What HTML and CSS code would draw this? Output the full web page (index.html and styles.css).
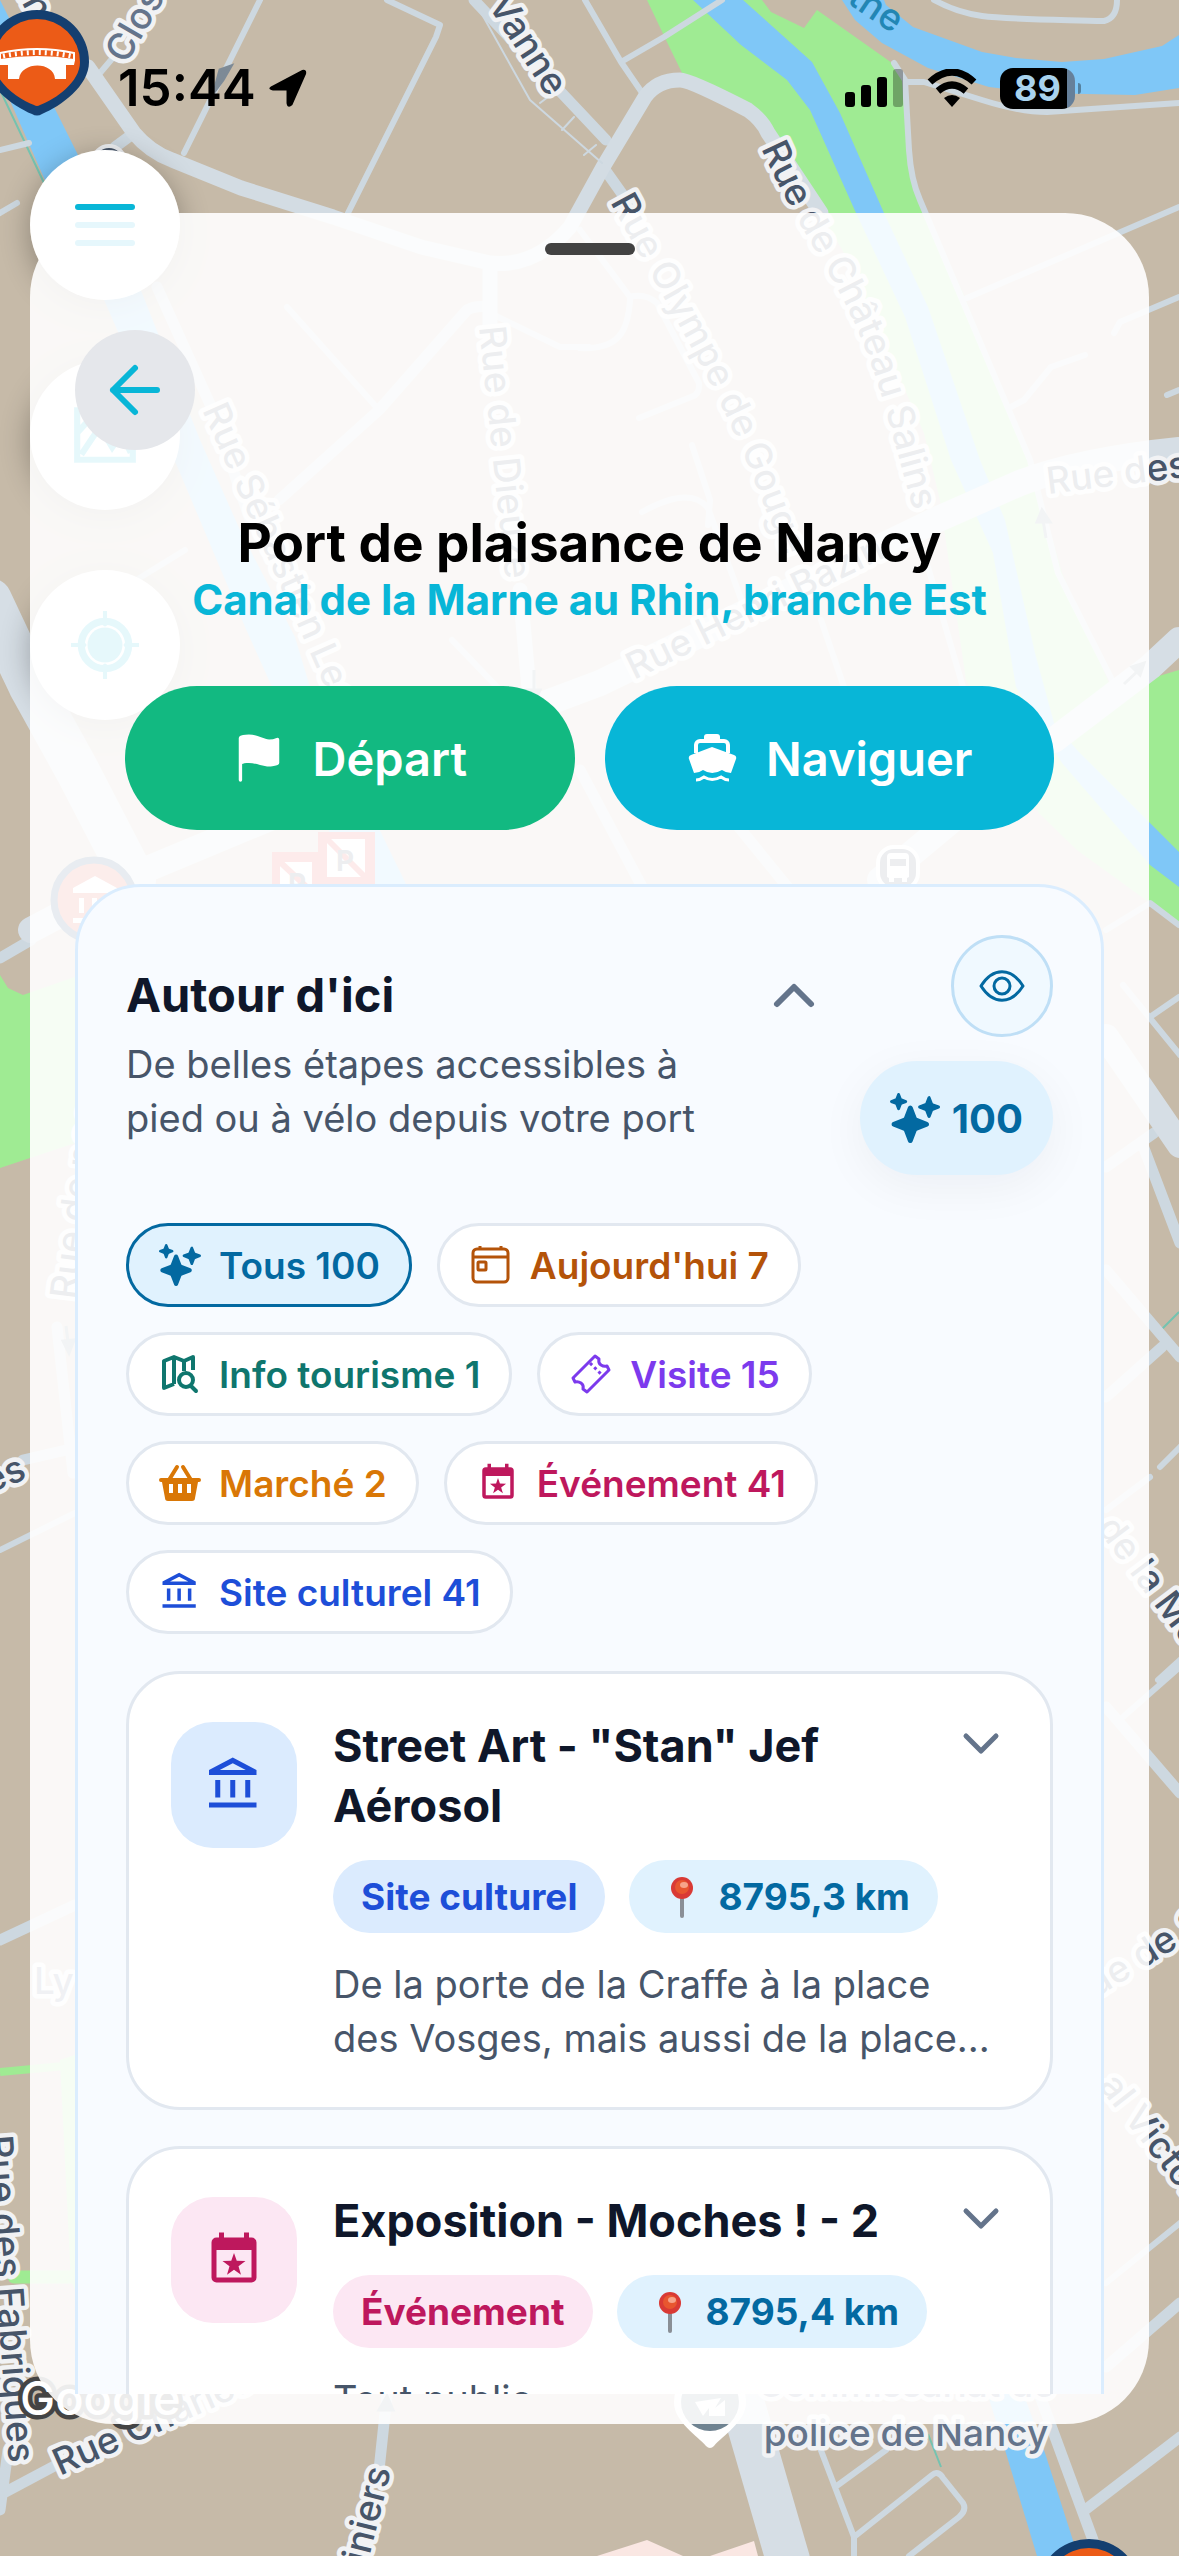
FILE: index.html
```html
<!DOCTYPE html>
<html lang="fr">
<head>
    <meta charset="UTF-8">
    <meta name="viewport" content="width=device-width, initial-scale=1.0">
    <title>Port de plaisance de Nancy</title>
    <link rel="stylesheet" href="styles.css">
</head>
<body>
    <!-- Shared icons -->
    <svg class="icon-defs" aria-hidden="true">
        <symbol id="icon-sparkles" viewBox="0 0 512 512">
            <path fill="currentColor" d="M208 512a24.84 24.84 0 01-23.34-16l-39.84-103.6a16.06 16.06 0 00-9.19-9.19L32 343.34a25 25 0 010-46.68l103.6-39.84a16.06 16.06 0 009.19-9.19L184.66 144a25 25 0 0146.68 0l39.84 103.6a16.06 16.06 0 009.19 9.19l103 39.63a25.49 25.49 0 0116.63 24.1 24.82 24.82 0 01-16 22.82l-103.6 39.84a16.06 16.06 0 00-9.19 9.19L231.34 496A24.84 24.84 0 01208 512zM88 176a14.67 14.67 0 01-13.69-9.4l-16.86-43.84a7.28 7.28 0 00-4.21-4.21L9.4 101.69a14.67 14.67 0 010-27.38l43.84-16.86a7.31 7.31 0 004.21-4.21L74.16 9.79A15 15 0 0186.23.11a14.67 14.67 0 0115.46 9.29l16.86 43.84a7.31 7.31 0 004.21 4.21l43.84 16.86a14.67 14.67 0 010 27.38l-43.84 16.86a7.28 7.28 0 00-4.21 4.21l-16.86 43.84A14.67 14.67 0 0188 176zM400 256a16 16 0 01-14.93-10.26l-22.84-59.37a8 8 0 00-4.6-4.6l-59.37-22.84a16 16 0 010-29.86l59.37-22.84a8 8 0 004.6-4.6l22.67-58.95a16.45 16.45 0 0113.17-10.57 16 16 0 0116.86 10.16l22.84 59.37a8 8 0 004.6 4.6l59.37 22.84a16 16 0 010 29.86l-59.37 22.84a8 8 0 00-4.6 4.6l-22.84 59.37A16 16 0 01400 256z"/>
        </symbol>
        <symbol id="icon-museum" viewBox="0 0 24 24">
            <path fill="currentColor" d="M6.5,10H4.5V17H6.5V10M12.5,10H10.5V17H12.5V10M21,19H2V21H21V19M18.5,10H16.5V17H18.5V10M11.5,3.26L16.71,6H6.29L11.5,3.26M11.5,1L2,6V8H21V6L11.5,1Z"/>
        </symbol>
        <symbol id="icon-event" viewBox="0 0 24 24">
            <path fill="currentColor" fill-rule="evenodd" d="M6 1h2v2h8V1h2v2h1a2 2 0 0 1 2 2v14a2 2 0 0 1-2 2H5a2 2 0 0 1-2-2V5a2 2 0 0 1 2-2h1zM5 8v11h14V8z"/>
            <path fill="currentColor" d="M12 9.2l1.1 3.1 3.5.1-2.8 2.1 1 3.4L12 15.9l-2.8 2 1-3.4-2.8-2.1 3.5-.1z"/>
        </symbol>
        <symbol id="icon-pin" viewBox="0 0 48 42">
            <rect x="23" y="21" width="4" height="21" rx="2" fill="#8a8f96"/>
            <circle cx="25" cy="12" r="11" fill="#d93a35"/>
            <circle cx="25" cy="11" r="7" fill="#e8562f"/>
            <ellipse cx="27" cy="9" rx="4" ry="3" fill="#f7a48a"/>
        </symbol>
        <symbol id="icon-down" viewBox="0 0 54 54">
            <path d="M12 20l15 15 15-15" fill="none" stroke="currentColor" stroke-width="5" stroke-linecap="round" stroke-linejoin="round"/>
        </symbol>
        <symbol id="marker-bridge" viewBox="0 0 104 106">
            <path d="M52 0a52 52 0 0 1 52 52c0 24-28 44-47 52q-5 3-10 0C28 96 0 76 0 52A52 52 0 0 1 52 0z" fill="#143f70"/>
            <path d="M52 9a43 43 0 0 1 43 43c0 20-24 37-40 43q-3 2-6 0C33 89 9 72 9 52A43 43 0 0 1 52 9z" fill="#ec5b17"/>
            <path d="M15 43q37-8 74 0v7q-37-6-74 0z" fill="none" stroke="#fff" stroke-width="2"/>
            <path d="M18 46q34-7 68 0" fill="none" stroke="#fff" stroke-width="5" stroke-dasharray="2 4"/>
            <path d="M14 50q38-6 76 0l-1 5h-8v14H70c-1-18-34-18-36 0H23V55h-8z" fill="#fff"/>
        </symbol>
    </svg>

    <!-- Map background -->
    <svg class="map" viewBox="0 0 1179 2556" preserveAspectRatio="xMidYMid slice" aria-hidden="true">
        <defs>
            <path id="street-salins" d="M761 148C792 218 825 260 853 320S890 430 914 512"/>
            <path id="street-olympe" d="M610 202C643 263 678 320 714 391S762 504 786 560"/>
            <path id="street-leclerc" d="M202 410L345 732"/>
        </defs>

        <g class="map-park">
            <path d="M647 0L666 40 683 75 748 107 775 138 821 213 848 260 924 433 940 500 966 680 1000 740 1039 813 1077 850 1146 900 1179 923V670L1112 690 1062 573 1030 460 963 293 926 213 911 173 905 80 892 63 817 10 804 28 771 12 762 0z"/>
            <path d="M0 975L8 988 23 995 75 977V1143L0 1168z"/>
            <path d="M60 2060L75 2055V2290L71 2280z"/>
            <path class="map-hedge" d="M0 2072L75 2065"/>
            <path class="map-hedge wide" d="M14 2277H72"/>
        </g>
        <g class="map-water">
            <path d="M693 0L741 45 787 80 810 110 856 213 905 317 951 460 993 553 1016 687 1062 763 1150 865 1179 887V852L1150 823 1077 750 1054 723 1035 653 1005 520 980 460 928 307 884 213 840 113 812 62 743 0z"/>
            <path d="M842 0L855 20 882 43 928 68 989 87 1039 93 1135 95 1179 88V35L1162 46 1104 59 1062 62 1016 58 982 52 913 27 886 5 884 0z"/>
            <path d="M0 0L54 107 77 153 142 293 200 440 240 530 295 637 310 687 406 884H350L272 687 245 627 180 473 101 293 44 178 11 103 0 70z"/>
            <path d="M980 2370L1005 2450 1037 2556H1078L1045 2453 1015 2370z"/>
        </g>
        <path class="map-building" d="M597 2556L647 2540 683 2556zM710 2556L754 2541 758 2556z"/>
        <path class="map-cycle" d="M0 90L45 185M928 2434L941 2467M1161 1330L1179 1312"/>

        <g class="map-road">
            <path class="lane" d="M260 0L184 153M387 0L440 25 436 37 348 213M111 60L100 73M0 150L29 143M0 213L17 203M585 0L621 62 645 97M722 0L664 37 621 62M934 0C970 20 990 18 1104 21Q1117 18 1117 0M894 63L905 80 909 150Q911 180 920 200L1030 460 1058 573 1112 680M905 82H924L982 100Q1020 112 1047 112L1179 103M1179 207L967 298M1179 297L1120 322 1114 333M1085 355L1051 367 1024 400 1009 408M1179 390L1167 395"/>
            <path class="lane" d="M580 230L630 297Q645 293 657 303L699 383Q700 395 691 397L639 418M630 300C628 330 620 350 580 348M287 307L379 410M494 315L560 347H589M692 445L710 500 708 525M642 512Q690 485 708 508L745 610M821 620L844 687M928 567L963 687M500 690L452 640M185 550L120 590M1123 985L1180 1055M1150 1017L1179 997M1106 1510L1150 1477M1160 1467L1180 1447M1158 1680L1180 1660M1123 1717L1180 1667M1106 2283L1180 2223M0 1550L75 1513M817 2440L854 2537V2556M838 2485L886 2450M854 2537L932 2475Q938 2470 943 2478L963 2503Q967 2510 959 2517L909 2556M1106 930L1150 903 1179 925"/>
            <path class="street" d="M490 263V307Q475 305 467 310L379 410 279 500M157 287L214 413 250 520M649 900L580 770M733 820L790 890M1106 1167L1154 1133M1142 1143L1180 1243M1106 1270L1180 1357M1106 1397L1162 1347M1106 1707L1180 1793M0 1940L75 1905M23 1460L75 1448M57 1327L73 1473M1106 2367L1180 2303M1036 2385L1093 2540M1085 2510L1180 2437M0 2495L60 2463M0 2510L8 2450M387 2395L379 2470M0 958L31 940M474 0L606 140M603 167L630 205M134 133L115 147"/>
            <path class="avenue" d="M88 67L134 133Q150 152 172 160L241 188 333 217 421 247 490 263Q535 268 570 227L603 167 645 97Q657 80 680 80 690 80 748 110 762 120 768 133L821 213M490 263V330M520 590L530 700"/>
            <path class="boulevard" d="M31 930L145 870 536 707 600 683 936 520 1020 483Q1080 460 1179 450M1054 740L1150 667 1179 640M1106 1037L1180 1145M880 880L1000 780"/>
            <path class="main" d="M-10 600L30 685 77 770 134 880M730 2360L788 2560"/>
            <path class="rail" d="M474 0L530 100 602 163M526 60L537 52M540 103L552 94M562 130L574 117M584 155L596 145"/>
        </g>

        <g class="map-labels">
            <text transform="translate(548 98) rotate(57)" text-anchor="end">la Vanne</text>
            <text transform="translate(126 65) rotate(-60)" class="soft">Clos</text>
            <text transform="translate(32 22) rotate(62)" text-anchor="end">Martin</text>
            <text transform="translate(893 34) rotate(34)" text-anchor="end" class="river">Meurthe</text>
            <text><textPath href="#street-salins">Rue de Château Salins</textPath></text>
            <text><textPath href="#street-olympe">Rue Olympe de Gouges</textPath></text>
            <text><textPath href="#street-leclerc">Rue Sébastien Leclerc</textPath></text>
            <text transform="translate(479 327) rotate(84)">Rue de Dieuze</text>
            <text transform="translate(634 680) rotate(-26)">Rue Henri Bazin</text>
            <text transform="translate(1048 494) rotate(-7)">Rue des Jardins</text>
            <text transform="translate(76 1300) rotate(-83)">Rue de nos</text>
            <text transform="translate(28 1478) rotate(-22)" text-anchor="end">Rues</text>
            <text transform="translate(1096 1528) rotate(53)">de la Monnaie</text>
            <text transform="translate(1096 1998) rotate(-32)">ue de Strasbourg</text>
            <text transform="translate(1098 2086) rotate(52)">al Victor</text>
            <text transform="translate(34 1994)" class="soft">Ly</text>
            <text transform="translate(-14 2136) rotate(86)">Rue des Fabriques</text>
            <text transform="translate(60 2476) rotate(-24)">Rue Charles III</text>
            <text transform="translate(391 2470) rotate(-76)" text-anchor="end">Jardiniers</text>
            <text x="906" y="2397" text-anchor="middle" class="soft poi">Commissariat de</text>
            <text x="906" y="2446" text-anchor="middle" class="soft poi">police de Nancy</text>
            <text x="20" y="2415" class="brand">Google</text>
        </g>

        <path class="map-arrow" d="M231 66l-8 14-9 12 6-22zM534 670v24m-6-4l6 14 6-14zM1046 538l-3-18m-6 2l5-12 8 12zM1124 684l16-15m-8-2l12-4-4 12zM66 1326l2 16m-5-1l6 12 5-13zM387 2396l-8 14h14z"/>
        <circle cx="109" cy="162" r="16" fill="#475569" stroke="#eef0f3" stroke-width="4"/>
        <path d="M674 2402a36 36 0 0 1 72 0c0 20-24 34-32 44q-4 4-8 0c-8-10-32-24-32-44z" fill="#fff"/>
        <circle cx="710" cy="2402" r="29" fill="#6f8391"/>
        <path d="M695 2402l8 14 6-8v8h16v-16l-10 8 6-10z" fill="#fff"/>
        <g>
            <circle cx="94" cy="900" r="40" fill="#d94a38" stroke="#143f70" stroke-width="7"/>
            <path d="M73 893v-5l22-12 22 12v5zM79 898h5v15h-5zM92 898h5v15h-5zM105 898h5v15h-5zM73 918h44v5H73z" fill="#fff"/>
            <path d="M272 852h48v40h-48z" fill="#e33b34"/>
            <path d="M280 862h32v30h-32z" fill="#fff"/>
            <path d="M318 832h57v54h-57z" fill="#e33b34"/>
            <path d="M327 839h38v38h-38z" fill="#fff"/>
            <path d="M327 839l38 38M280 862l32 30" stroke="#e33b34" stroke-width="6"/>
            <text x="336" y="871" class="sign">P</text>
            <text x="288" y="894" class="sign">P</text>
            <rect x="878" y="847" width="40" height="42" rx="16" fill="#475569" stroke="#fff" stroke-width="4"/>
            <path d="M887 877v-20q0-4 4-4h14q4 0 4 4v20l-2 1v4h-5v-4h-8v4h-5v-4z" fill="#fff"/>
            <path d="M890 859h16v7h-16z" fill="#475569"/>
        </g>
        <use href="#marker-bridge" x="-15" y="10" width="104" height="106"/>
        <use href="#marker-bridge" x="1037" y="2539" width="104" height="106"/>
    </svg>

    <!-- Status bar -->
    <div class="status-bar">
        <div class="status-left">
            <span class="status-time">15:44</span>
            <svg class="status-location" viewBox="0 0 40 40"><path d="M3 18L35 1q5-1 4 4L25 37q-5 4-6-2V22H5q-6-1-2-4z"/></svg>
        </div>
        <div class="status-right">
            <svg class="status-signal" viewBox="0 0 59 38">
                <rect x="0" y="23" width="10" height="15" rx="3"/>
                <rect x="16" y="16" width="10" height="22" rx="3"/>
                <rect x="32" y="8" width="10" height="30" rx="3"/>
                <rect x="48" y="0" width="10" height="38" rx="3" opacity=".3"/>
            </svg>
            <svg class="status-wifi" viewBox="0 0 50 38">
                <path d="M3 13q22-20 44 0M11 22q14-12 28 0" fill="none" stroke="#000" stroke-width="7"/>
                <path d="M17 29q8-6 16 0l-8 9z"/>
            </svg>
            <div class="battery"><span class="battery-level">89</span></div>
        </div>
    </div>

    <!-- Map controls under the sheet -->
    <div class="map-controls">
        <div class="menu-shadow"></div>
        <button type="button" class="round-button" aria-label="Type de carte">
            <svg class="round-icon" viewBox="0 0 66 66"><path d="M6 9h54v48H6zM6 31L26 9M10 52l18-27 12 20 9-13 9 18" fill="none" stroke="currentColor" stroke-width="6"/></svg>
        </button>
        <button type="button" class="round-button" aria-label="Ma position">
            <svg class="round-icon" viewBox="0 0 66 66">
                <circle cx="33" cy="33" r="23" fill="none" stroke="currentColor" stroke-width="7"/>
                <circle cx="33" cy="33" r="17" fill="currentColor"/>
                <path d="M33 1v12M33 53v12M1 33h12M53 33h12" stroke="currentColor" stroke-width="4" stroke-linecap="round"/>
            </svg>
        </button>
    </div>

    <button type="button" class="round-button menu-button" aria-label="Menu">
        <span class="menu-line active"></span>
        <span class="menu-line"></span>
        <span class="menu-line"></span>
    </button>

    <main class="app">
        <section class="sheet">
            <div class="sheet-handle"></div>
            <div class="sheet-content">
                <button type="button" class="back-button" aria-label="Retour">
                    <svg class="back-icon" viewBox="0 0 60 60"><path d="M30 8L8 30l22 22M8 30h44" fill="none" stroke="currentColor" stroke-width="6" stroke-linecap="round" stroke-linejoin="round"/></svg>
                </button>

                <header class="place">
                    <h1>Port de plaisance de Nancy</h1>
                    <p class="waterway">Canal de la Marne au Rhin, branche Est</p>
                </header>

                <div class="actions">
                    <button type="button" class="action start">
                        <svg class="action-icon" viewBox="0 0 512 512"><path fill="currentColor" d="M80 480a16 16 0 01-16-16V68.13a24 24 0 0111.88-20.72C88 40.38 112.38 32 160 32c37.21 0 78.83 14.71 115.55 27.68C305.12 70.13 333.05 80 352 80a183.84 183.84 0 0071-14.5 18 18 0 0125 16.58v219.36a20 20 0 01-12 18.31c-8.71 3.81-40.51 16.25-84 16.25-24.14 0-54.38-7.14-86.39-14.71C229.63 312.79 192.43 304 160 304c-36.87 0-55.74 5.58-64 9.11V464a16 16 0 01-16 16z"/></svg>
                        Départ
                    </button>
                    <button type="button" class="action navigate">
                        <svg class="action-icon" viewBox="0 0 54 54">
                            <path d="M10 22v-8a4 4 0 0 1 4-4h24a4 4 0 0 1 4 4v8" fill="none" stroke="currentColor" stroke-width="4"/>
                            <rect x="18" y="3" width="16" height="9" rx="3" fill="currentColor"/>
                            <path d="M26 16l22 8q3 1 2 4l-5 14q-5 0-9-3-10 6-19 0-4 3-9 3L3 28q-1-3 2-4z" fill="currentColor"/>
                            <path d="M10 49q4 0 8-3 8 5 17 0 4 3 8 3" fill="none" stroke="currentColor" stroke-width="3"/>
                        </svg>
                        Naviguer
                    </button>
                </div>

                <section class="nearby">
                    <div class="nearby-header">
                        <button type="button" class="nearby-toggle" aria-expanded="true">
                            <span class="nearby-text">
                                <span class="nearby-title">Autour d'ici</span>
                                <span class="nearby-subtitle">De belles étapes accessibles à pied ou à vélo depuis votre port</span>
                            </span>
                            <svg class="toggle-icon" viewBox="0 0 60 60"><path d="M13 39l17-17 17 17" fill="none" stroke="currentColor" stroke-width="6" stroke-linecap="round" stroke-linejoin="round"/></svg>
                        </button>
                        <div class="nearby-side">
                            <button type="button" class="eye-button" aria-label="Afficher sur la carte">
                                <svg class="eye-icon" viewBox="0 0 54 54"><path d="M6 27C18 8 36 8 48 27 36 46 18 46 6 27z" fill="none" stroke="currentColor" stroke-width="3" stroke-linejoin="round"/><circle cx="27" cy="27" r="8" fill="none" stroke="currentColor" stroke-width="3"/></svg>
                            </button>
                            <div class="total">
                                <svg class="total-icon"><use href="#icon-sparkles"/></svg>
                                100
                            </div>
                        </div>
                    </div>

                    <div class="filters">
                        <button type="button" class="chip all selected"><svg class="chip-icon"><use href="#icon-sparkles"/></svg>Tous 100</button>
                        <button type="button" class="chip today">
                            <svg class="chip-icon" viewBox="0 0 42 42"><rect x="3" y="5" width="35" height="33" rx="4" fill="none" stroke="currentColor" stroke-width="3"/><path d="M3 13h35M10 2v4M31 2v4" stroke="currentColor" stroke-width="3"/><rect x="8" y="18" width="8" height="8" rx="1" fill="none" stroke="currentColor" stroke-width="3"/></svg>
                            Aujourd'hui 7
                        </button>
                        <button type="button" class="chip info">
                            <svg class="chip-icon" viewBox="0 0 42 42"><path d="M34 17V4l-9 4-10-4-10 4v27l10-4M15 4v27M25 8v10" fill="none" stroke="currentColor" stroke-width="4" stroke-linejoin="round"/><circle cx="27" cy="27" r="7" fill="none" stroke="currentColor" stroke-width="4"/><path d="M32 33l5 5" stroke="currentColor" stroke-width="4" stroke-linecap="round"/></svg>
                            Info tourisme 1
                        </button>
                        <button type="button" class="chip visit">
                            <svg class="chip-icon" viewBox="0 0 42 42"><path d="M3 25L25 3l4 3q-1 4 2 6t6 1l2 4-22 22-4-3q1-4-2-6t-6-1z" fill="none" stroke="currentColor" stroke-width="3" stroke-linejoin="round"/><path d="M20 10l13 13" stroke="currentColor" stroke-width="3" stroke-dasharray="3 3"/></svg>
                            Visite 15
                        </button>
                        <button type="button" class="chip market">
                            <svg class="chip-icon" viewBox="0 0 42 42"><path d="M10 18l8-13M32 18L24 5" stroke="currentColor" stroke-width="4" stroke-linecap="round"/><path fill="currentColor" fill-rule="evenodd" d="M2 16h38q2 0 2 2t-2 2h-1l-3 16q0 3-3 3H9q-3 0-3-3L3 20H2q-2 0-2-2t2-2zM10 22v9h4v-9zM19 22v9h4v-9zM28 22v9h4v-9z"/></svg>
                            Marché 2
                        </button>
                        <button type="button" class="chip event"><svg class="chip-icon"><use href="#icon-event"/></svg>Événement 41</button>
                        <button type="button" class="chip culture"><svg class="chip-icon"><use href="#icon-museum"/></svg>Site culturel 41</button>
                    </div>

                    <div class="cards">
                        <article class="card">
                            <div class="card-badge culture"><svg class="card-badge-icon"><use href="#icon-museum"/></svg></div>
                            <div class="card-body">
                                <div class="card-top">
                                    <h2>Street Art - "Stan" Jef Aérosol</h2>
                                    <button type="button" class="card-toggle" aria-label="Voir plus"><svg class="card-toggle-icon"><use href="#icon-down"/></svg></button>
                                </div>
                                <div class="tags">
                                    <span class="tag culture">Site culturel</span>
                                    <span class="tag distance"><svg class="tag-icon"><use href="#icon-pin"/></svg>8795,3 km</span>
                                </div>
                                <p class="card-text">De la porte de la Craffe à la place<br>des Vosges, mais aussi de la place...</p>
                            </div>
                        </article>

                        <article class="card">
                            <div class="card-badge event"><svg class="card-badge-icon"><use href="#icon-event"/></svg></div>
                            <div class="card-body">
                                <div class="card-top">
                                    <h2>Exposition - Moches ! - 2</h2>
                                    <button type="button" class="card-toggle" aria-label="Voir plus"><svg class="card-toggle-icon"><use href="#icon-down"/></svg></button>
                                </div>
                                <div class="tags">
                                    <span class="tag event">Événement</span>
                                    <span class="tag distance"><svg class="tag-icon"><use href="#icon-pin"/></svg>8795,4 km</span>
                                </div>
                                <p class="card-text">Tout public</p>
                            </div>
                        </article>
                    </div>
                </section>
            </div>
        </section>
    </main>
</body>
</html>
```

FILE: styles.css
```css
* {
    margin: 0;
    padding: 0;
    box-sizing: border-box;
}

body {
    position: relative;
    height: 100vh;
    overflow: hidden;
    background-color: #c6baa8;
    color: #0f172a;
    font-family: Inter, "Liberation Sans", sans-serif;
}

button {
    border: none;
    background: none;
    color: inherit;
    font-family: inherit;
    cursor: pointer;
}

svg {
    display: block;
    flex-shrink: 0;
}

.icon-defs {
    position: absolute;
    width: 0;
    height: 0;
}

/* Map */
.map {
    position: absolute;
    inset: 0;
    width: 100%;
    height: 100%;
}

.map-park {
    fill: #9feb93;
}

.map-hedge {
    fill: none;
    stroke: #9feb93;
    stroke-width: 8;
}

.map-hedge.wide {
    stroke-width: 13;
    stroke-linecap: round;
}

.map-water {
    fill: #7fc7f7;
}

.map-building {
    fill: #fae7e3;
}

.map-cycle {
    fill: none;
    stroke: #74c3b0;
    stroke-width: 2;
}

.map-road {
    fill: none;
    stroke: #cdd8e0;
    stroke-linecap: round;
    stroke-linejoin: round;
}

.lane {
    stroke-width: 6;
}

.street {
    stroke-width: 11;
}

.avenue {
    stroke: #d3dce3;
    stroke-width: 15;
}

.boulevard {
    stroke: #d6dee5;
    stroke-width: 26;
}

.main {
    stroke: #d6dee5;
    stroke-width: 44;
}

.rail {
    stroke-width: 2;
}

.map-arrow {
    fill: #7d8a96;
    stroke: #7d8a96;
    stroke-width: 3;
}

.map-labels text {
    fill: #475569;
    stroke: #f1f2f4;
    stroke-width: 9;
    stroke-linejoin: round;
    paint-order: stroke;
    font-size: 37px;
    font-weight: 500;
}

.map-labels .soft {
    fill: #64748b;
}

.map-labels .river {
    fill: #2286b4;
    stroke: none;
}

.map-labels .brand {
    fill: #fff;
    stroke: #444;
    font-size: 47px;
}

.sign {
    fill: #475569;
    font-size: 28px;
    font-weight: 700;
}

/* Status bar */
.status-bar {
    position: absolute;
    top: 57px;
    left: 0;
    right: 0;
    z-index: 4;
    display: flex;
    justify-content: space-between;
    align-items: center;
    height: 62px;
    padding: 0 104px 0 118px;
    color: #000;
}

.status-left,
.status-right {
    display: flex;
    align-items: center;
}

.status-left {
    gap: 12px;
}

.status-right {
    gap: 23px;
}

.status-time {
    font-size: 51px;
    font-weight: 600;
    line-height: 60px;
}

.status-location {
    width: 39px;
    height: 39px;
}

.status-signal {
    width: 59px;
    height: 38px;
}

.status-wifi {
    width: 50px;
    height: 38px;
}

.battery {
    position: relative;
    width: 75px;
    height: 41px;
    border-radius: 13px;
    background: linear-gradient(to right, #000 67px, #66809a 67px);
    text-align: center;
}

.battery::after {
    content: "";
    position: absolute;
    top: 15px;
    right: -6px;
    width: 3px;
    height: 11px;
    border-radius: 0 3px 3px 0;
    background-color: #55819f;
}

.battery-level {
    color: #a9d3ee;
    font-size: 36px;
    font-weight: 700;
    line-height: 41px;
}

/* Floating buttons */
.map-controls {
    position: absolute;
    top: 150px;
    left: 30px;
    z-index: 1;
    display: flex;
    flex-direction: column;
    gap: 60px;
}

.round-button,
.menu-shadow {
    width: 150px;
    height: 150px;
    border-radius: 50%;
    box-shadow: 0 6px 30px rgba(0, 0, 0, 0.3);
}

.round-button {
    display: flex;
    flex-direction: column;
    align-items: center;
    justify-content: center;
    gap: 12px;
    background-color: #fff;
    color: #08b6d7;
}

.round-icon {
    width: 68px;
    height: 68px;
}

.menu-button {
    position: absolute;
    top: 150px;
    left: 30px;
    z-index: 3;
    box-shadow: none;
}

.menu-line {
    width: 60px;
    height: 6px;
    border-radius: 3px;
    background-color: #e6f7fc;
}

.menu-line.active {
    background-color: #08b6d7;
}

/* Bottom sheet */
.app {
    position: relative;
    z-index: 2;
    display: flex;
    flex-direction: column;
    height: 100vh;
    padding: 213px 30px 132px;
}

.sheet {
    display: flex;
    flex: 1;
    flex-direction: column;
    min-height: 0;
    padding: 30px 0;
    border-radius: 84px;
    background-color: rgba(255, 255, 255, 0.9);
}

.sheet-handle {
    flex-shrink: 0;
    width: 90px;
    height: 12px;
    margin: 0 auto;
    border-radius: 6px;
    background-color: #424242;
}

.sheet-content {
    flex: 1;
    min-height: 0;
    padding: 75px 45px 0;
    overflow: hidden;
}

.back-button {
    display: flex;
    align-items: center;
    justify-content: center;
    width: 120px;
    height: 120px;
    border-radius: 50%;
    background-color: #e5e7eb;
    color: #08b6d7;
}

.back-icon {
    width: 60px;
    height: 60px;
}

.place {
    padding: 63px 0 60px;
    text-align: center;
}

h1 {
    color: #000;
    font-size: 53px;
    font-weight: 700;
    line-height: 60px;
}

.waterway {
    color: #08b6d7;
    font-size: 42px;
    font-weight: 700;
    line-height: 53px;
}

.actions {
    display: flex;
    gap: 30px;
    padding: 0 50px;
}

.action {
    display: flex;
    flex: 1;
    align-items: center;
    justify-content: center;
    gap: 26px;
    height: 144px;
    border-radius: 72px;
    color: #fff;
    font-size: 47px;
    font-weight: 600;
}

.action-icon {
    width: 54px;
    height: 54px;
}

.start {
    background-color: #12b981;
}

.navigate {
    background-color: #08b6d7;
}

/* Around here */
.nearby {
    margin-top: 54px;
    padding: 48px;
    border: 3px solid #dbedfe;
    border-radius: 66px;
    background-color: #f8fbff;
}

.nearby-header {
    display: flex;
    align-items: center;
    gap: 36px;
}

.nearby-toggle {
    display: flex;
    flex: 1;
    align-items: flex-start;
    gap: 24px;
    min-width: 0;
    text-align: left;
}

.nearby-text {
    display: flex;
    flex: 1;
    flex-direction: column;
    gap: 12px;
}

.nearby-title {
    font-size: 47px;
    font-weight: 700;
    line-height: 60px;
}

.nearby-subtitle {
    color: #475569;
    font-size: 38px;
    line-height: 54px;
}

.toggle-icon {
    width: 60px;
    height: 60px;
    color: #64748b;
}

.nearby-side {
    display: flex;
    flex-direction: column;
    align-items: flex-end;
    gap: 24px;
}

.eye-button {
    display: flex;
    align-items: center;
    justify-content: center;
    width: 102px;
    height: 102px;
    border: 3px solid #bfdff6;
    border-radius: 50%;
    background-color: #f0f9ff;
    color: #0369a1;
}

.eye-icon {
    width: 54px;
    height: 54px;
}

.total {
    display: flex;
    align-items: center;
    gap: 12px;
    height: 114px;
    padding: 0 30px;
    border-radius: 57px;
    background-color: #e0f2fe;
    color: #0369a1;
    font-size: 40px;
    font-weight: 700;
    box-shadow: 0 12px 48px rgba(15, 23, 42, 0.05);
}

.total-icon {
    width: 50px;
    height: 50px;
}

/* Filters */
.filters {
    display: flex;
    flex-wrap: wrap;
    gap: 25px;
    margin-top: 48px;
}

.chip {
    display: flex;
    align-items: center;
    gap: 18px;
    height: 84px;
    padding: 0 29px 0 30px;
    border: 3px solid #e2e8f0;
    border-radius: 42px;
    background-color: #fff;
    font-size: 37px;
    font-weight: 600;
}

.chip-icon {
    width: 42px;
    height: 42px;
}

.chip.all {
    color: #0369a1;
}

.chip.selected {
    border-color: #0369a1;
    background-color: #e0f2fe;
}

.chip.today {
    color: #b45309;
}

.chip.info {
    color: #0f766e;
}

.chip.visit {
    color: #7c3aed;
}

.chip.market {
    color: #d97706;
}

.chip.event {
    color: #be185d;
}

.chip.culture {
    color: #1d4ed8;
}

/* Cards */
.cards {
    display: flex;
    flex-direction: column;
    gap: 36px;
    margin-top: 37px;
}

.card {
    display: flex;
    gap: 36px;
    padding: 42px;
    border: 3px solid #e2e8f0;
    border-radius: 54px;
    background-color: #fff;
}

.card-badge {
    display: flex;
    flex-shrink: 0;
    align-items: center;
    justify-content: center;
    width: 126px;
    height: 126px;
    margin-top: 6px;
    border-radius: 42px;
}

.card-badge-icon {
    width: 60px;
    height: 60px;
}

.card-badge.culture,
.tag.culture {
    background-color: #dbebfe;
    color: #1d4ed8;
}

.card-badge.event,
.tag.event {
    background-color: #fce7f3;
    color: #be185d;
}

.card-body {
    flex: 1;
    min-width: 0;
}

.card-top {
    display: flex;
    align-items: flex-start;
    gap: 24px;
}

h2 {
    flex: 1;
    font-size: 45px;
    font-weight: 700;
    line-height: 60px;
}

.card-toggle,
.card-toggle-icon {
    width: 54px;
    height: 54px;
    color: #64748b;
}

.tags {
    display: flex;
    gap: 24px;
    margin: 24px 0;
}

.tag {
    display: flex;
    align-items: center;
    gap: 13px;
    height: 73px;
    padding: 0 28px;
    border-radius: 37px;
    font-size: 37px;
    font-weight: 700;
}

.tag.distance {
    background-color: #e0f2fe;
    color: #0369a1;
}

.tag-icon {
    width: 48px;
    height: 42px;
}

.card-text {
    color: #475569;
    font-size: 38px;
    line-height: 54px;
}
```
